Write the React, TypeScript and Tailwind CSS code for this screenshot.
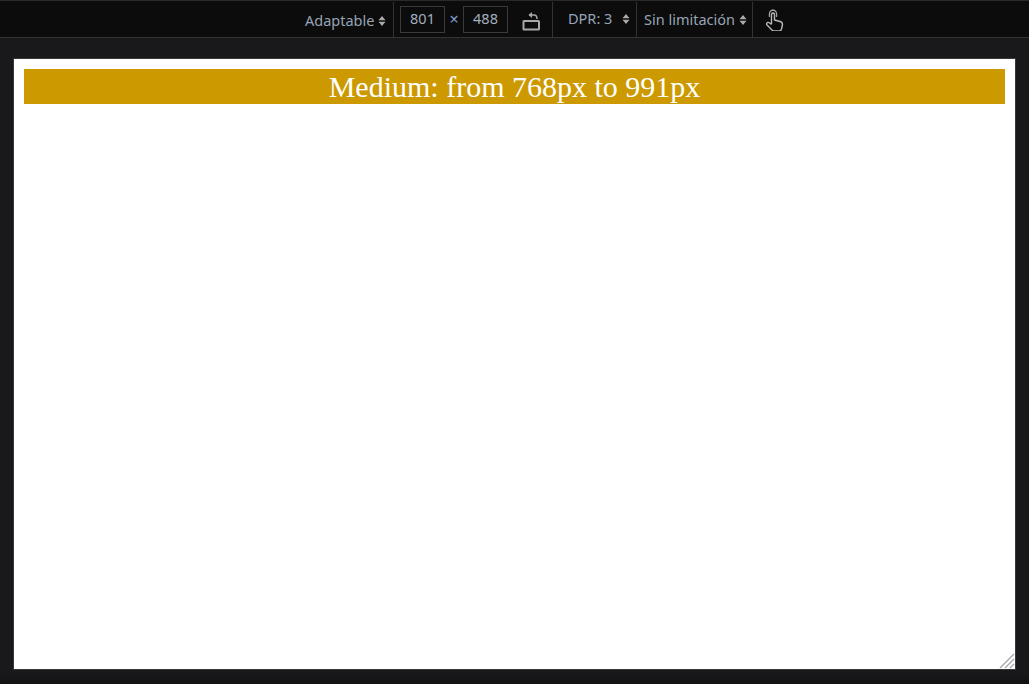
const UI_FONT = 'font-["Noto_Sans","Open_Sans",sans-serif]';

function SortCaret() {
	return (
		<svg width="8" height="12" viewBox="0 0 8 12" className="shrink-0" aria-hidden="true">
			<path d="M4 1 L7.5 5.2 H0.5 Z M4 11 L7.5 6.8 H0.5 Z" fill="#aaaaaa" />
		</svg>
	);
}

function RotateIcon() {
	return (
		<svg width="20" height="24" viewBox="0 0 20 24" fill="none" aria-hidden="true">
			<rect x="2.5" y="14" width="15.5" height="8.5" rx="0.5" stroke="#a8a8a8" strokeWidth="2" />
			<path d="M8 8 H13 Q16 8 16 12" stroke="#a8a8a8" strokeWidth="1.5" />
			<path d="M11 5 L7.5 8 L11 11 Z" fill="#a8a8a8" />
		</svg>
	);
}

function TouchIcon() {
	return (
		<svg width="20" height="24" viewBox="0 0 20 24" fill="none" aria-hidden="true">
			<path
				d="M6.5 17 V8 Q6.5 6 8 6 Q9.5 6 9.5 8 V13 L15 14.5 Q17.5 15.2 17.5 17.5 L16.5 22 Q16 23.5 15 24 H8 L2 18 Q1 16.5 2.5 15.5 Q4 15 6.5 17.5"
				stroke="#b8b8b8"
				strokeWidth="1.4"
				strokeLinejoin="round"
			/>
			<path d="M4.5 10 Q3.5 3.5 8 3 Q12.5 3.5 11.5 10" stroke="#a0a0a0" strokeWidth="1.3" />
		</svg>
	);
}

function SizeInput({ value }: { value: string }) {
	return (
		<div className="flex h-[27px] items-center justify-center border border-[#3a3a3a] text-[14.5px] text-[#a3aebd]">
			{value}
		</div>
	);
}

function Divider() {
	return <div className="h-[35px] w-px shrink-0 bg-[#333333]" />;
}

function Toolbar() {
	return (
		<div className={`flex h-[38px] shrink-0 items-center border-y border-t-[#2a2a2a] border-b-[#333333] bg-[#0c0c0c] pl-[305px] ${UI_FONT}`}>
			<div className="flex w-[88px] items-center gap-[4px] pt-[4px] text-[14.5px] text-[#96a4b6]">
				<span>Adaptable</span>
				<SortCaret />
			</div>
			<Divider />
			<div className="ml-[6px] w-[45px]"><SizeInput value="801" /></div>
			<span className="w-[18px] text-center text-[16px] text-[#7f9fd0]">×</span>
			<div className="w-[45px]"><SizeInput value="488" /></div>
			<div className="ml-[13px] mr-[11px] flex w-[20px] justify-center"><RotateIcon /></div>
			<Divider />
			<div className="flex w-[83px] items-center pl-[15px] pr-[6px] text-[14.5px] text-[#96a4b6]">
				<span>DPR: 3</span>
				<span className="ml-auto"><SortCaret /></span>
			</div>
			<Divider />
			<div className="flex w-[115px] items-center gap-[4px] pl-[7px] pt-[1px] text-[14.5px] text-[#96a4b6]">
				<span>Sin limitación</span>
				<SortCaret />
			</div>
			<Divider />
			<div className="ml-[12px]"><TouchIcon /></div>
		</div>
	);
}

export default function App() {
	return (
		<div className="flex h-[684px] w-[1029px] flex-col overflow-hidden bg-[#19191b]">
			<Toolbar />
			<div className="flex-1 px-[13px] pt-[20px] shadow-[inset_0_-9px_8px_-8px_#0e0e0f]">
				<div className="relative h-[612px] border border-[#38383a] bg-white p-[10px]">
					<div className="flex h-[35px] items-center justify-center bg-[#cc9900] font-['Liberation_Serif',serif] text-[30px] text-white">
						Medium: from 768px to 991px
					</div>
					<svg width="16" height="16" viewBox="0 0 16 16" className="absolute bottom-0 right-0" aria-hidden="true">
						<path d="M1 15 L15 1 M6 15 L15 6 M11 15 L15 11" stroke="#a8a8a8" strokeWidth="1.4" />
					</svg>
				</div>
			</div>
		</div>
	);
}
